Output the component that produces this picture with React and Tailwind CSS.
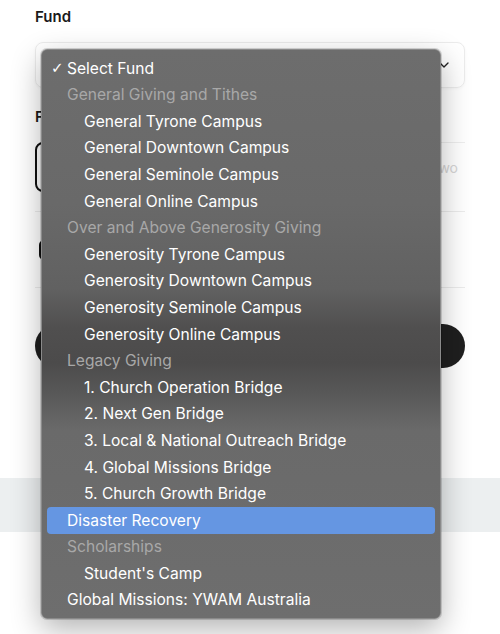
import { ChevronDown } from 'lucide-react';

const options = [
  { label: 'Select Fund', checked: true },
  { label: 'General Giving and Tithes', group: true },
  { label: 'General Tyrone Campus', indent: true },
  { label: 'General Downtown Campus', indent: true },
  { label: 'General Seminole Campus', indent: true },
  { label: 'General Online Campus', indent: true },
  { label: 'Over and Above Generosity Giving', group: true },
  { label: 'Generosity Tyrone Campus', indent: true },
  { label: 'Generosity Downtown Campus', indent: true },
  { label: 'Generosity Seminole Campus', indent: true },
  { label: 'Generosity Online Campus', indent: true },
  { label: 'Legacy Giving', group: true },
  { label: '1. Church Operation Bridge', indent: true },
  { label: '2. Next Gen Bridge', indent: true },
  { label: '3. Local & National Outreach Bridge', indent: true },
  { label: '4. Global Missions Bridge', indent: true },
  { label: '5. Church Growth Bridge', indent: true },
  { label: 'Disaster Recovery', active: true },
  { label: 'Scholarships', group: true },
  { label: "Student's Camp", indent: true },
  { label: 'Global Missions: YWAM Australia' }
];

const FundMenu = () => {
  return (
    <div className="absolute left-[41px] top-[49px] w-[400px] rounded-[6px] border border-[#8a8a8a] bg-[linear-gradient(to_bottom,#6d6d6d_0%,#696969_27%,#616161_42%,#504f4f_49%,#4c4b4b_55%,#575757_60%,#6a6a6a_67%,#6e6e6e_100%)] px-[5px] py-[5px] text-[15.6px] shadow-[0_0_0_1px_rgba(0,0,0,0.15),0_10px_30px_rgba(0,0,0,0.3)]">
      {options.map((opt) => (
        <div
          key={opt.label}
          className={`relative flex h-[26.6px] items-center rounded-[4px] ${
            opt.active ? 'bg-[#6596e2]' : ''
          } ${opt.indent ? 'pl-[37px]' : 'pl-[20px]'} ${
            opt.group ? 'text-[#a8a8a8]' : 'text-white'
          }`}
        >
          {opt.checked && (
            <span className="absolute left-[4px] font-['DejaVu_Sans',sans-serif] text-[15px] leading-none">✓</span>
          )}
          <span className="whitespace-nowrap">{opt.label}</span>
        </div>
      ))}
    </div>
  );
};

export default function App() {
  return (
    <div className="relative h-[634px] w-[500px] overflow-hidden bg-white font-['Inter',sans-serif] text-[15px]">
      {/* Form behind the open select */}
      <div className="px-[35px] pt-[7px]">
        <label className="block text-[15px] font-semibold leading-[20px] text-[#1a1a1a]">
          Fund
        </label>
        <div className="mt-[15px] flex h-[46px] items-center justify-end rounded-[8px] border border-[#ececec] pr-[12px] shadow-[0_1px_3px_rgba(0,0,0,0.04)]">
          <ChevronDown className="h-4 w-4 text-[#222]" strokeWidth={2} />
        </div>

        <label className="mt-[19px] block text-[15px] font-semibold leading-[20px] text-[#1a1a1a]">
          Frequency
        </label>
        <div className="mt-[15px] flex h-[50px]">
          <div className="w-[120px] rounded-[8px] border-2 border-[#111]" />
          <div className="flex flex-1 items-center justify-end border-t border-[#eeeeee] pr-[7px] text-[14px] text-[#d6d6d6]">
            Two
          </div>
        </div>

        <div className="mt-[19px] border-t border-[#ececec]" />
        <div className="flex h-[75px] items-center">
          <div className="ml-[4px] h-[20px] w-[20px] rounded-[5px] border-2 border-[#111]" />
        </div>
        <div className="border-t border-[#ececec]" />

        <button className="mt-[36px] h-[44px] w-full rounded-full bg-[#1f1f1f] text-white" />
      </div>

      <div className="mt-[103px] h-[54px] w-full bg-[#eceff0]" />

      <FundMenu />
    </div>
  );
}
